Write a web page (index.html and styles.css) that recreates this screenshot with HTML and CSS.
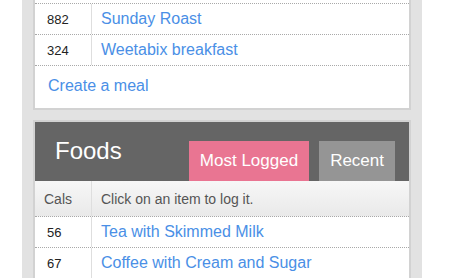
FILE: index.html
```html
<!DOCTYPE html>
<html lang="en">
<head>
<meta charset="utf-8">
<title>Meals and Foods</title>
<link rel="stylesheet" href="styles.css">
</head>
<body>
<div class="page">
  <div class="column">
    <section class="card meals">
      <div class="row"><div class="cals">882</div><div class="name"><a href="#">Sunday Roast</a></div></div>
      <div class="row"><div class="cals">324</div><div class="name"><a href="#">Weetabix breakfast</a></div></div>
      <div class="create"><a href="#">Create a meal</a></div>
    </section>

    <section class="card foods">
      <header class="card-head">
        <h2 class="title">Foods</h2>
        <div class="tabs">
          <a href="#" class="tab tab-active">Most Logged</a>
          <a href="#" class="tab">Recent</a>
        </div>
      </header>
      <div class="row row-head"><div class="cals">Cals</div><div class="name">Click on an item to log it.</div></div>
      <div class="row"><div class="cals">56</div><div class="name"><a href="#">Tea with Skimmed Milk</a></div></div>
      <div class="row"><div class="cals">67</div><div class="name"><a href="#">Coffee with Cream and Sugar</a></div></div>
    </section>
  </div>
</div>
</body>
</html>
```

FILE: styles.css
```css
html, body {
  margin: 0;
  padding: 0;
  background: #ffffff;
  font-family: "Liberation Sans", Arial, sans-serif;
  overflow: hidden;
}

.page {
  display: flex;
  padding-left: 22px;
  height: 278px;
}

.column {
  width: 400px;
  box-sizing: border-box;
  padding: 0 11px;
  background: #e2e2e2;
  display: flex;
  flex-direction: column;
  gap: 10px;
}

.card {
  background: #ffffff;
  border: 2px solid #d2d2d2;
}

.meals {
  margin-top: -2px;
  padding-top: 3px;
}

.meals .row:first-child {
  border-top: 1px dotted #a9a9a9;
}

.row {
  display: grid;
  grid-template-columns: 57px 1fr;
  height: 31px;
  box-sizing: border-box;
  border-bottom: 1px dotted #a9a9a9;
}

.meals .row:first-child {
  height: 32px;
}

.cals {
  box-sizing: border-box;
  border-right: 1px solid #dedede;
  padding-left: 12px;
  font-size: 13px;
  color: #222222;
  display: flex;
  align-items: center;
}

.name {
  padding-left: 9px;
  display: flex;
  align-items: center;
  font-size: 16px;
}

a {
  color: #4a8fe6;
  text-decoration: none;
}

.create {
  height: 42px;
  box-sizing: border-box;
  padding: 11px 13px 0;
  font-size: 16px;
}

.card-head {
  height: 59px;
  background: #656565;
  display: flex;
  justify-content: space-between;
  align-items: flex-end;
  padding-right: 14px;
}

.title {
  align-self: flex-start;
  margin: 0;
  padding: 15px 0 0 20px;
  font-size: 24px;
  font-weight: normal;
  color: #ffffff;
}

.tabs {
  display: flex;
  gap: 10px;
}

.tab {
  height: 40px;
  box-sizing: border-box;
  padding: 10px 11px 0;
  font-size: 17px;
  color: #ffffff;
  background: #959595;
}

.tab-active {
  background: #e97592;
}

.row-head {
  height: 36px;
  background: linear-gradient(#f7f7f7, #e9e9e9);
}

.row-head .cals {
  padding-left: 9px;
  font-size: 14px;
  color: #555555;
}

.row-head .name {
  font-size: 14px;
  color: #555555;
}
```
